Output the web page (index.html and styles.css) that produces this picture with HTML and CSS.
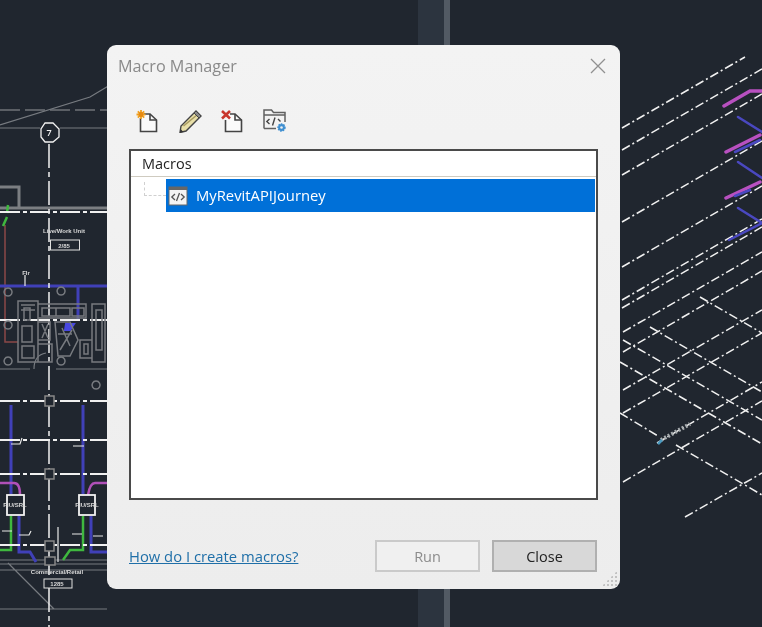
FILE: index.html
```html
<!DOCTYPE html>
<html lang="en">
<head>
  <meta charset="UTF-8">
  <title>Macro Manager</title>
  <link rel="stylesheet" href="styles.css">
</head>
<body>

  <!-- CAD drawing behind the dialog -->
  <svg class="cad" width="762" height="627" viewBox="0 0 762 627">
    <rect class="band" x="418" y="0" width="26" height="627"/>
    <rect class="band-light" x="444" y="0" width="6" height="627"/>

    <!-- left plan -->
    <path class="gray-dash" d="M0 110H107"/>
    <path class="gray-thin" d="M0 128H40M60 128H107M0 125L90 97L110 85"/>
    <path class="gray-thick" d="M0 187H19V208M0 208H107"/>
    <path class="gray-thin" d="M0 369H30M34 369C34 358 40 354 46 353M56 369H107M0 560H107M0 564H107M0 570H107M0 609H107M8 563L54 609"/>
    <path class="red" d="M5 225V342H18"/>
    <path class="green" d="M3 226L7 217M7 213L8 205"/>
    <path class="blue" d="M0 286H107M78 286V320M11 405V494M83 405V494M19 516V552H30L36 562M91 516V552H107"/>
    <path class="blue-blob" d="M66 324H74L70 330H65Z"/>
    <path class="magenta" d="M0 483H14Q20 483 20 495M107 483H95Q90 483 88 495"/>
    <path class="green" d="M11 516V550H0M83 516V550H70L63 560"/>

    <path class="axis" d="M49 144V627"/>
    <path class="white-dash" d="M0 212H107M0 320H107M0 401H107M0 440H107M0 474H107M0 545H107"/>
    <path class="white-thin" d="M58 527V562M25 275V286"/>

    <polygon class="bubble" points="45,123 53,123 59,129 59,137 53,142 45,142 41,137 41,129"/>
    <text class="cad-num" x="49" y="136">7</text>

    <text class="cad-label" x="64" y="233">Live/Work Unit</text>
    <rect class="tag" x="50.5" y="240" width="29" height="10"/>
    <text class="cad-label" x="64" y="248">2/85</text>
    <text class="cad-label" x="26" y="275">Flr</text>

    <!-- unit furniture -->
    <path class="furniture" d="M18 301H38V362H18ZM21 305H35M21 310H35M24 308H30V320H24ZM22 326H32V342H22ZM22 346H34V358H22ZM38 304H86V318H38ZM42 308H56V316H42ZM56 308H70V316H56ZM72 308H84V316H72ZM38 322H50V340H38ZM42 324L48 338M48 324L42 338M55 322H70L78 340L70 356H58ZM62 328L70 346M72 330L60 350M58 334H72M80 340H92V358H80ZM84 344H88V354H84ZM92 304H105V362H92ZM96 310H102V350H96ZM38 344H52V362H38Z"/>
    <path class="furniture" d="M8 288a4 4 0 1 0 .1 0ZM61 287a4 4 0 1 0 .1 0ZM8 321a4 4 0 1 0 .1 0ZM8 357a4 4 0 1 0 .1 0ZM61 357a4 4 0 1 0 .1 0ZM96 381a4 4 0 1 0 .1 0Z"/>
    <rect class="node" x="45" y="396" width="9" height="10"/>
    <rect class="node" x="45" y="469" width="9" height="10"/>
    <rect class="node" x="45" y="541" width="9" height="10"/>
    <rect class="node" x="45" y="557" width="10" height="8"/>

    <!-- fan coil units -->
    <rect class="unit" x="7" y="495" width="17" height="20"/>
    <rect class="unit" x="79" y="495" width="16" height="20"/>
    <text class="cad-label" x="15" y="507">FIU/SRL</text>
    <text class="cad-label" x="87" y="507">FIU/SRL</text>
    <path class="white-thin" d="M11 444H20L22 438M73 446H84M2 531H12M19 535H29L31 531M72 534H82M93 536H103"/>
    <text class="cad-label" x="57" y="574">Commercial/Retail</text>
    <rect class="tag" x="44" y="579" width="28" height="9"/>
    <text class="cad-label" x="57" y="586">1285</text>

    <!-- right isometric -->
    <path class="iso-dash" d="M622 128L745 57M622 150L762 69M622 175L762 94M622 222L762 141M622 267L762 186M622 300L762 219M622 308L762 227M623 332L762 252M623 352L762 271M623 390L762 310M623 413L762 333M657 443L762 382M623 482L762 401M685 517L762 473"/>
    <path class="iso-dash" d="M620 413L658 436M676 445L762 495M623 340L762 420M620 362L762 444M650 327L762 392M700 297L762 333"/>
    <path class="iso-pink" d="M724 106L750 91H762M726 152L760 135M726 198L760 182"/>
    <path class="iso-blue" d="M738 117L762 132M738 162L762 178M738 208L762 223M729 240L762 223M735 152L760 140M735 196L750 190"/>
    <path class="iso-tag" d="M661 440L690 424"/>
    <path class="iso-tip" d="M658 444L662 440"/>
  </svg>

  <div class="dialog">
    <div class="title-bar">
      <span class="title">Macro Manager</span>
      <svg class="close-x" width="16" height="16" viewBox="0 0 16 16">
        <path d="M1 1L15 15M15 1L1 15"/>
      </svg>
    </div>

    <div class="toolbar">
      <!-- new -->
      <svg class="tool" width="24" height="24" viewBox="0 0 24 24">
        <path class="doc" d="M8.500 5H15L21.500 11V22.500H5.500V9"/>
        <path class="doc-fold" d="M15 5V11H21.500"/>
        <path class="spark" d="M6 1V10M1.500 5.500H10.500M2.800 2.300L9.200 8.700M9.200 2.300L2.800 8.700"/>
        <circle class="spark-dot" cx="6" cy="5.500" r="2.400"/>
      </svg>
      <!-- edit -->
      <svg class="tool" width="24" height="24" viewBox="0 0 24 24">
        <path class="pencil" d="M18 2L23 7L8 22L2 23.500L3 17Z"/>
        <path class="pencil-mid" d="M5.500 17L19.500 5.500"/>
        <path class="pencil-cap" d="M16 4L18 2L23 7L21 9Z"/>
        <path class="pencil-tip" d="M2 23.500L2.600 20L5.500 22.900Z"/>
      </svg>
      <!-- delete -->
      <svg class="tool" width="24" height="24" viewBox="0 0 24 24">
        <path class="doc" d="M10 5H15L21.500 11V22.500H5.500V11"/>
        <path class="doc-fold" d="M15 5V11H21.500"/>
        <path class="cross" d="M2 2L10 9.500M10 2L2 9.500"/>
      </svg>
      <!-- macro folder -->
      <svg class="tool" width="24" height="24" viewBox="0 0 24 24">
        <path class="folder" d="M1 19.500V1H8.500L10.500 3.500H22V13M1 19.500H13M1 6H22"/>
        <path class="code" d="M6.500 10L3.800 12.500L6.500 15M12 8.500L9.500 16.500M15 10L17.500 12.500"/>
        <circle class="gear" cx="18.500" cy="18.500" r="3.400"/>
        <circle class="gear-hole" cx="18.500" cy="18.500" r="1.300"/>
      </svg>
    </div>

    <div class="tree">
      <div class="tree-head">Macros</div>
      <div class="tree-row">
        <span class="tree-line"></span>
        <div class="tree-item">
          <svg class="item-icon" width="20" height="20" viewBox="0 0 20 20">
            <rect class="item-frame" x="1" y="1" width="18" height="18"/>
            <rect class="item-top" x="1" y="1" width="18" height="3"/>
            <path class="item-code" d="M7 8L3.800 11L7 14M11.500 7L8.500 15M13 8L16.200 11L13 14"/>
          </svg>
          <span class="item-name">MyRevitAPIJourney</span>
        </div>
      </div>
    </div>

    <div class="footer">
      <a class="help" href="#">How do I create macros?</a>
      <div class="buttons">
        <button class="btn" disabled>Run</button>
        <button class="btn btn-close">Close</button>
      </div>
    </div>

    <div class="grip"></div>
  </div>

</body>
</html>
```

FILE: styles.css
```css
html, body {
  margin: 0;
  padding: 0;
}

body {
  width: 762px;
  height: 627px;
  overflow: hidden;
  background: #20262f;
  font-family: "Open Sans", "Noto Sans", sans-serif;
}

.cad {
  position: absolute;
  left: 0;
  top: 0;
  filter: blur(0.5px);
  fill: none;
}

.band { fill: #2c343f; stroke: none; }
.band-light { fill: #525a64; stroke: none; }

.gray-dash { stroke: #6f7378; stroke-width: 1.500; stroke-dasharray: 20 5; }
.gray-thin { stroke: #777b80; stroke-width: 1.200; }
.gray-thick { stroke: #7b7e82; stroke-width: 3; }
.red { stroke: #8a4848; stroke-width: 1.500; }
.green { stroke: #3fb83f; stroke-width: 2.500; }
.blue { stroke: #4040b8; stroke-width: 3; }
.blue-blob { fill: #4848e0; stroke: #4848e0; stroke-width: 2; }
.magenta { stroke: #b050b8; stroke-width: 2.500; }
.axis { stroke: #f2f2f2; stroke-width: 1.500; stroke-dasharray: 24 4 5 4; }
.white-dash { stroke: #f0f0f0; stroke-width: 1.800; stroke-dasharray: 20 3 4 3; }
.white-thin { stroke: #e8e8e8; stroke-width: 1.200; }
.bubble { stroke: #f2f2f2; stroke-width: 1.300; fill: #20262f; }
.tag { stroke: #e0e0e0; stroke-width: 1; fill: #20262f; }
.unit { stroke: #f2f2f2; stroke-width: 1.800; fill: #20262f; }
.node { stroke: #888; stroke-width: 1.500; fill: #20262f; }
.furniture { stroke: #777a7f; stroke-width: 1.500; }

.cad-num {
  fill: #f2f2f2;
  font-size: 9px;
  font-weight: 600;
  text-anchor: middle;
}

.cad-label {
  fill: #d8d8d8;
  font-family: "Liberation Sans", sans-serif;
  font-size: 6px;
  font-weight: 700;
  text-anchor: middle;
}

.iso-dash {
  stroke: #f0f0f0;
  stroke-width: 1.500;
  stroke-dasharray: 9 3 2 3;
}

.iso-pink { stroke: #b850c0; stroke-width: 3.500; stroke-linecap: round; }
.iso-blue { stroke: #4a48c0; stroke-width: 2.500; stroke-linecap: round; }
.iso-tag { stroke: #a8adb0; stroke-width: 4; stroke-dasharray: 2 2; }
.iso-tip { stroke: #4a9ac0; stroke-width: 2.500; }

/* dialog */
.dialog {
  position: absolute;
  left: 107px;
  top: 45px;
  width: 513px;
  height: 544px;
  box-sizing: border-box;
  padding: 0 22px 0 22px;
  display: flex;
  flex-direction: column;
  border-radius: 9px;
  background: linear-gradient(#f3f3f3, #ededed);
  filter: blur(0.3px);
}

.title-bar {
  height: 41px;
  display: flex;
  align-items: center;
  justify-content: space-between;
  margin-left: -11px;
  margin-right: -8px;
}

.title {
  font-size: 16.200px;
  color: #8a8a8a;
}

.close-x path {
  fill: none;
  stroke: #909090;
  stroke-width: 1.300;
}

.toolbar {
  display: flex;
  gap: 18.500px;
  margin-top: 23px;
  margin-left: 6px;
  height: 40px;
}

.doc, .doc-fold { fill: none; stroke: #444; stroke-width: 1.600; }
.doc { fill: #fafafa; }
.spark { stroke: #f0a020; stroke-width: 1.800; }
.spark-dot { fill: #e88a10; }
.pencil { fill: #e8dfa8; stroke: #444; stroke-width: 1.400; }
.pencil-mid { stroke: #a89a60; stroke-width: 1.500; }
.pencil-cap { fill: #8a8a8a; stroke: #444; stroke-width: 1; }
.pencil-tip { fill: #333; }
.cross { stroke: #c8362c; stroke-width: 2.600; fill: none; }
.folder { fill: none; stroke: #606060; stroke-width: 1.500; }
.code { fill: none; stroke: #444; stroke-width: 1.400; }
.gear { fill: #3f8fd0; stroke: #3f8fd0; stroke-width: 1.600; stroke-dasharray: 1.500 1; }
.gear-hole { fill: #f0f0f0; }

.tree {
  height: 351px;
  box-sizing: border-box;
  border: 2px solid #4a4a4a;
  background: #fff;
}

.tree-head {
  height: 25px;
  line-height: 25px;
  padding-left: 11px;
  font-size: 14.500px;
  color: #222;
  border-bottom: 1px solid #cfcbc0;
}

.tree-row {
  position: relative;
  margin-top: 2px;
  margin-left: 35px;
  margin-right: 1px;
}

.tree-line {
  position: absolute;
  left: -22px;
  top: 3px;
  width: 22px;
  height: 14px;
  box-sizing: border-box;
  border-left: 1px dashed #d0d0d0;
  border-bottom: 1px dashed #d0d0d0;
}

.tree-item {
  height: 33px;
  display: flex;
  align-items: center;
  gap: 8px;
  padding-left: 2px;
  background: #0070d8;
  color: #fff;
  font-size: 14.800px;
}

.item-name {
  padding-bottom: 2px;
}

.item-frame { fill: #f4f4f4; stroke: #666; stroke-width: 1; }
.item-top { fill: #666; }
.item-code { fill: none; stroke: #555; stroke-width: 1.300; }

.footer {
  display: flex;
  justify-content: space-between;
  align-items: center;
  margin-top: 40px;
  height: 32px;
}

.help {
  font-size: 14.800px;
  color: #1f6fa8;
}

.buttons {
  display: flex;
  gap: 12px;
  margin-right: 1px;
}

.btn {
  width: 105px;
  height: 32px;
  padding: 0;
  font: inherit;
  font-size: 14.500px;
  color: #222;
  background: #d8d8d8;
  border: 2px solid #b0b0b0;
}

.btn:disabled {
  color: #8c8c8c;
  background: #f0f0f0;
  border-color: #cacaca;
}

.grip {
  position: absolute;
  right: 3px;
  bottom: 3px;
  width: 15px;
  height: 15px;
  background: radial-gradient(circle, #c2c2c2 1px, transparent 1.200px) 0 0 / 4px 4px;
  clip-path: polygon(100% 0, 100% 100%, 0 100%);
}
```
